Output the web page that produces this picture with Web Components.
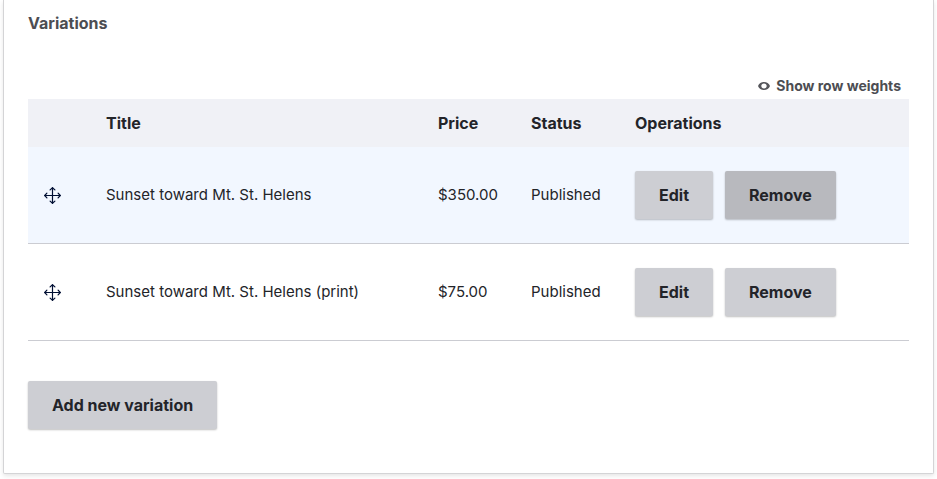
<!DOCTYPE html>
<html lang="en">
<head>
<meta charset="utf-8">
<title>Variations</title>
<style>
  body {
    margin: 0;
    background: #fff;
    color: #232429;
    font: 15px/24px Inter, "Liberation Sans", sans-serif;
  }
</style>
</head>
<body>
<variations-panel>
  <span slot="title">Variations</span>
  <weights-toggle slot="tools">Show row weights</weights-toggle>
  <variations-table></variations-table>
  <action-button slot="actions">Add new variation</action-button>
</variations-panel>

<template id="panel-template">
  <style>
    :host {
      display: block;
      box-sizing: border-box;
      margin: 0 3px 5px;
      padding: 11px 24px 44px;
      border: 1px solid #d4d4d6;
      border-top: 0;
      border-radius: 0 0 2px 2px;
      background: #fff;
      box-shadow: 0 2px 4px rgba(0, 0, 0, .1);
    }
    h2 {
      margin: 0;
      color: #4c4d52;
      font-size: 16px;
      font-weight: 700;
      line-height: 24px;
    }
    .tools {
      display: flex;
      justify-content: flex-end;
      padding: 39px 8px 1px;
    }
    .actions {
      display: flex;
      padding-top: 40px;
    }
  </style>
  <section aria-labelledby="heading">
    <h2 id="heading"><slot name="title"></slot></h2>
    <div class="tools"><slot name="tools"></slot></div>
    <slot></slot>
    <div class="actions"><slot name="actions"></slot></div>
  </section>
</template>

<template id="toggle-template">
  <style>
    :host { display: inline-flex; }
    button {
      display: flex;
      align-items: center;
      gap: 6px;
      padding: 0;
      border: 0;
      background: none;
      color: #4c4d52;
      font: 700 14px/24px Inter, "Liberation Sans", sans-serif;
      cursor: pointer;
    }
    svg { display: block; }
  </style>
  <button type="button">
    <svg width="12" height="8" viewBox="0 0 12 8" aria-hidden="true">
      <path fill="#55565b" fill-rule="evenodd" d="M6 0C3.200 0 1 1.500 0 4c1 2.500 3.200 4 6 4s5-1.500 6-4C11 1.500 8.800 0 6 0zM6 6.500C4.400 6.500 3.300 5.400 3.300 4S4.400 1.500 6 1.500 8.700 2.600 8.700 4 7.600 6.500 6 6.500z"/>
    </svg>
    <slot></slot>
  </button>
</template>

<template id="button-template">
  <style>
    :host { display: inline-flex; }
    button {
      padding: 12px 24px;
      border: 0;
      border-radius: 2px;
      background: #cdced3;
      color: #232429;
      font: 700 16px/24px Inter, "Liberation Sans", sans-serif;
      box-shadow: 0 1px 2px rgba(0, 0, 0, .25);
      white-space: nowrap;
      cursor: pointer;
    }
    :host([active]) button, button:hover { background: #b8b9be; }
  </style>
  <button type="button"><slot></slot></button>
</template>

<template id="handle-template">
  <style>
    :host { display: flex; }
    a { display: block; cursor: move; }
    svg { display: block; }
  </style>
  <a href="#" title="Drag to re-order" aria-label="Drag to re-order">
    <svg width="17" height="17" viewBox="0 0 17 17" fill="none" stroke="#000f33" stroke-linecap="round" stroke-linejoin="round" aria-hidden="true">
      <path stroke-width="1.200" d="M8.500 .8v15.400M.8 8.500h15.400"/>
      <path stroke-width="1.200" d="M6.100 2.900 8.500 .7l2.400 2.200M6.100 14.100l2.400 2.200 2.400-2.200M2.900 6.100.7 8.500l2.200 2.400M14.100 6.100l2.200 2.400-2.200 2.400"/>
    </svg>
  </a>
</template>

<template id="table-template">
  <style>
    :host { display: block; }
    table {
      width: 100%;
      border-collapse: separate;
      border-spacing: 0;
      table-layout: fixed;
    }
    th, td { text-align: left; vertical-align: middle; white-space: nowrap; }
    th {
      padding: 12px 16px;
      background: #f0f1f6;
      font-size: 16px;
      font-weight: 700;
    }
    td {
      padding: 24px 16px;
      border-bottom: 1px solid #cbccd2;
    }
    tr.current td { background: #f2f7ff; }
    .drag { width: 30px; }
    .price { width: 61px; }
    .status { width: 72px; }
    .operations { width: 258px; }
    .buttons { display: flex; gap: 12px; }
  </style>
  <table>
    <thead>
      <tr>
        <th class="drag" scope="col" aria-label="Order"></th>
        <th scope="col">Title</th>
        <th class="price" scope="col">Price</th>
        <th class="status" scope="col">Status</th>
        <th class="operations" scope="col">Operations</th>
      </tr>
    </thead>
    <tbody>
      <tr class="current">
        <td><drag-handle></drag-handle></td>
        <td>Sunset toward Mt. St. Helens</td>
        <td>$350.00</td>
        <td>Published</td>
        <td><div class="buttons"><action-button>Edit</action-button><action-button active>Remove</action-button></div></td>
      </tr>
      <tr>
        <td><drag-handle></drag-handle></td>
        <td>Sunset toward Mt. St. Helens (print)</td>
        <td>$75.00</td>
        <td>Published</td>
        <td><div class="buttons"><action-button>Edit</action-button><action-button>Remove</action-button></div></td>
      </tr>
    </tbody>
  </table>
</template>

<script>
  class TemplateElement extends HTMLElement {
    constructor() {
      super();
      const template = document.getElementById(this.constructor.template);
      this.attachShadow({ mode: "open" }).append(template.content.cloneNode(true));
    }
  }
  class ActionButton extends TemplateElement { static template = "button-template"; }
  class DragHandle extends TemplateElement { static template = "handle-template"; }
  class WeightsToggle extends TemplateElement { static template = "toggle-template"; }
  class VariationsTable extends TemplateElement { static template = "table-template"; }
  class VariationsPanel extends TemplateElement { static template = "panel-template"; }

  customElements.define("action-button", ActionButton);
  customElements.define("drag-handle", DragHandle);
  customElements.define("weights-toggle", WeightsToggle);
  customElements.define("variations-table", VariationsTable);
  customElements.define("variations-panel", VariationsPanel);
</script>
</body>
</html>
